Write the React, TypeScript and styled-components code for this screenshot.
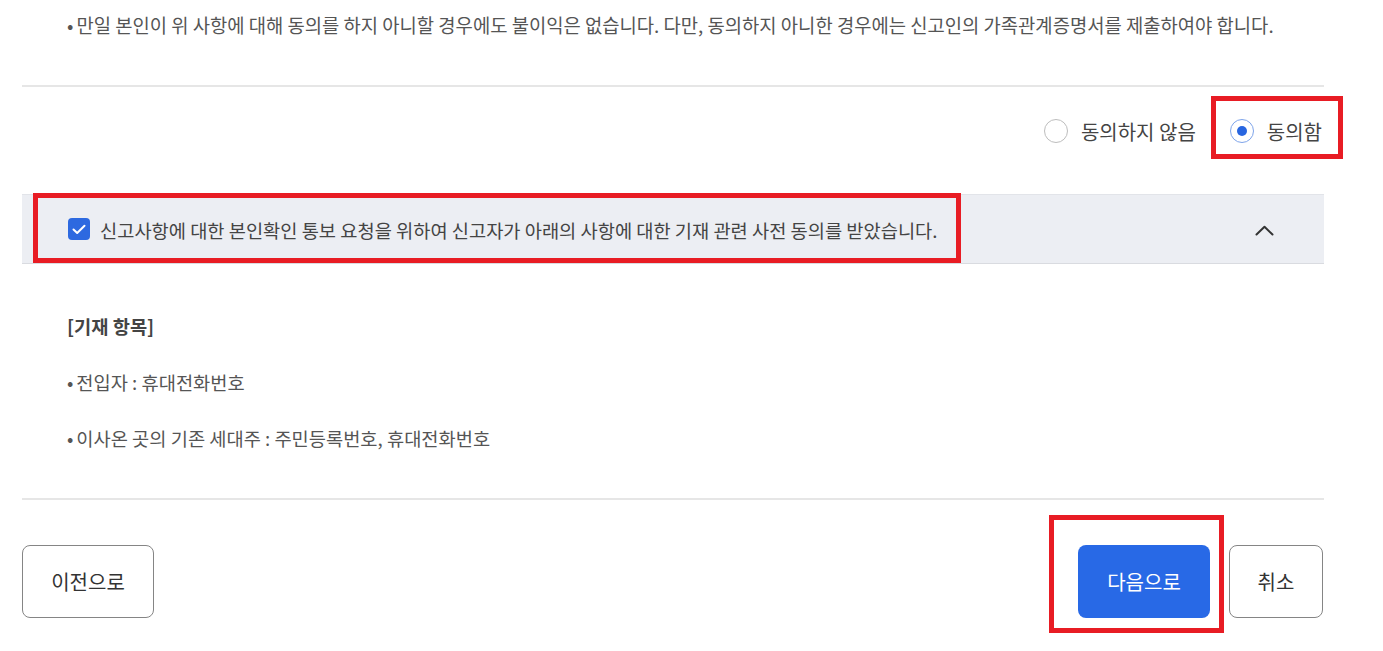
import React, { useState } from "react";
import styled, { createGlobalStyle } from "styled-components";

const Global = createGlobalStyle`
  html, body { margin: 0; padding: 0; background: #ffffff; }
  body { font-family: "Noto Sans CJK KR", "Noto Sans", sans-serif; color: #444; }
  * { box-sizing: border-box; }
`;

const Page = styled.div`
  width: 1302px;
  margin-left: 22px;
  display: flex;
  flex-direction: column;
  padding-bottom: 33px;
`;

const Notice = styled.p`
  margin: 0;
  padding: 12px 0 0 45px;
  height: 87px;
  font-size: 18.8px;
  line-height: 26px;
  color: #555;
  border-bottom: 2px solid #e6e6e6;
  white-space: nowrap;
`;

const Bullet = styled.span`
  margin-right: 3px;
`;

const RadioRow = styled.div`
  height: 107px;
  display: flex;
  justify-content: flex-end;
  align-items: flex-start;
  gap: 34px;
  padding-right: 2px;
  padding-top: 31px;
`;

const RadioOption = styled.label`
  position: relative;
  display: flex;
  align-items: center;
  gap: 13px;
  height: 26px;
  font-size: 20px;
  color: #444;
  cursor: pointer;
`;

const RadioCircle = styled.span<{ $checked: boolean }>`
  width: 24px;
  height: 24px;
  border-radius: 50%;
  border: 1.5px solid ${(p) => (p.$checked ? "#7ea4ea" : "#bdbdbd")};
  display: flex;
  align-items: center;
  justify-content: center;
  background: #fff;
  &::after {
    content: "";
    width: 10px;
    height: 10px;
    border-radius: 50%;
    background: #2866e0;
    display: ${(p) => (p.$checked ? "block" : "none")};
  }
`;

const Mark = styled.span<{ $t: number; $r: number; $b: number; $l: number }>`
  position: absolute;
  top: ${(p) => p.$t}px;
  right: ${(p) => p.$r}px;
  bottom: ${(p) => p.$b}px;
  left: ${(p) => p.$l}px;
  border: 5px solid #e81c24;
  pointer-events: none;
`;

const AccordionHeader = styled.div`
  height: 70px;
  background: #eceef3;
  border-top: 1px solid #e2e4e9;
  border-bottom: 1px solid #d9dbe0;
  display: flex;
  align-items: center;
  justify-content: space-between;
  padding: 0 50px 0 46px;
`;

const CheckLabel = styled.label`
  position: relative;
  display: flex;
  align-items: center;
  gap: 10px;
  height: 24px;
  font-size: 18.7px;
  color: #444;
  white-space: nowrap;
`;

const CheckBox = styled.span`
  width: 22px;
  height: 22px;
  border-radius: 4px;
  background: #2d69e0;
  display: flex;
  align-items: center;
  justify-content: center;
  flex-shrink: 0;
`;

const Chevron = styled.svg`
  width: 19px;
  height: 11px;
  margin-top: 2px;
`;

const Body = styled.div`
  padding: 49px 0 47px 45px;
  display: flex;
  flex-direction: column;
  gap: 30px;
  border-bottom: 2px solid #e6e6e6;
`;

const Line = styled.div<{ $bold?: boolean }>`
  font-size: 18.7px;
  line-height: 26px;
  color: ${(p) => (p.$bold ? "#444" : "#555")};
  font-weight: ${(p) => (p.$bold ? 700 : 400)};
`;

const Footer = styled.div`
  padding-top: 45px;
  display: flex;
  align-items: center;
`;

const Right = styled.div`
  margin-left: auto;
  display: flex;
  gap: 19px;
  padding-right: 1px;
`;

const HighlightWrap = styled.span`
  position: relative;
  display: inline-flex;
`;

const Button = styled.button<{ $primary?: boolean; $w: number }>`
  width: ${(p) => p.$w}px;
  height: 73px;
  border-radius: 8px;
  font-family: inherit;
  font-size: 20px;
  color: ${(p) => (p.$primary ? "#ffffff" : "#333")};
  background: ${(p) => (p.$primary ? "#2869e6" : "#ffffff")};
  border: ${(p) => (p.$primary ? "none" : "1.5px solid #858585")};
  cursor: pointer;
  padding: 0;
`;

export default function App() {
  const [agree, setAgree] = useState(true);
  return (
    <>
      <Global />
      <Page>
        <Notice>
          <Bullet>•</Bullet>만일 본인이 위 사항에 대해 동의를 하지 아니할 경우에도 불이익은 없습니다. 다만, 동의하지 아니한 경우에는 신고인의 가족관계증명서를 제출하여야 합니다.
        </Notice>
        <RadioRow>
          <RadioOption onClick={() => setAgree(false)}>
            <RadioCircle $checked={!agree} />
            동의하지 않음
          </RadioOption>
          <RadioOption onClick={() => setAgree(true)}>
            <RadioCircle $checked={agree} />
            동의함
            <Mark $t={-22} $r={-21} $b={-15} $l={-19} />
          </RadioOption>
        </RadioRow>
        <AccordionHeader>
          <CheckLabel>
            <CheckBox>
              <svg width="14" height="11" viewBox="0 0 14 11" fill="none">
                <polyline points="1.5,5.5 5.2,9 12.5,1.8" stroke="#fff" strokeWidth="2" strokeLinecap="round" strokeLinejoin="round" />
              </svg>
            </CheckBox>
            신고사항에 대한 본인확인 통보 요청을 위하여 신고자가 아래의 사항에 대한 기재 관련 사전 동의를 받았습니다.
            <Mark $t={-24} $r={-24} $b={-22} $l={-35} />
          </CheckLabel>
          <Chevron viewBox="0 0 19 11" fill="none">
            <polyline points="1.5,9.5 9.5,1.8 17.5,9.5" stroke="#333" strokeWidth="2" strokeLinecap="round" strokeLinejoin="round" />
          </Chevron>
        </AccordionHeader>
        <Body>
          <Line $bold>[기재 항목]</Line>
          <Line><Bullet>•</Bullet>전입자 : 휴대전화번호</Line>
          <Line><Bullet>•</Bullet>이사온 곳의 기존 세대주 : 주민등록번호, 휴대전화번호</Line>
        </Body>
        <Footer>
          <Button $w={132}>이전으로</Button>
          <Right>
            <HighlightWrap>
              <Button $primary $w={132}>다음으로</Button>
              <Mark $t={-30} $r={-14} $b={-15} $l={-29} />
            </HighlightWrap>
            <Button $w={94}>취소</Button>
          </Right>
        </Footer>
      </Page>
    </>
  );
}
